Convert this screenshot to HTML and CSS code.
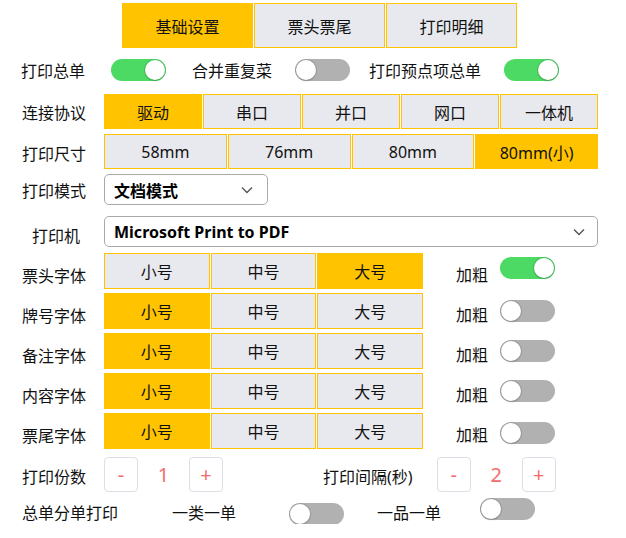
FILE: index.html
```html
<!DOCTYPE html>
<html lang="zh-CN">
  <head>
    <meta charset="UTF-8" />
    <meta name="viewport" content="width=device-width, initial-scale=1.0" />
    <title>打印设置</title>
    <link rel="stylesheet" href="styles.css">
  </head>
  <body>
    <div class="page">
      <div class="tabs">
        <div class="tab ativo">基础设置</div>
        <div class="tab">票头票尾</div>
        <div class="tab">打印明细</div>
      </div>

      <div class="linha linha-switch">
        <span class="texto t-total">打印总单</span>
        <span class="toggle on"></span>
        <span class="texto t-merge">合并重复菜</span>
        <span class="toggle"></span>
        <span class="texto t-pre">打印预点项总单</span>
        <span class="toggle on"></span>
      </div>

      <div class="linha linha-proto">
        <span class="label">连接协议</span>
        <div class="seg seg-proto">
          <div class="btn ativo">驱动</div>
          <div class="btn">串口</div>
          <div class="btn">并口</div>
          <div class="btn">网口</div>
          <div class="btn">一体机</div>
        </div>
      </div>

      <div class="linha linha-size">
        <span class="label">打印尺寸</span>
        <div class="seg seg-proto">
          <div class="btn">58mm</div>
          <div class="btn">76mm</div>
          <div class="btn">80mm</div>
          <div class="btn ativo">80mm(小)</div>
        </div>
      </div>

      <div class="linha linha-mode">
        <span class="label">打印模式</span>
        <div class="select select-mode">
          <span>文档模式</span>
          <svg width="12" height="8" viewBox="0 0 12 8"><path d="M1 1.5 L6 6.5 L11 1.5" fill="none" stroke="#555" stroke-width="1.4"/></svg>
        </div>
      </div>

      <div class="linha linha-printer">
        <span class="label label-printer">打印机</span>
        <div class="select select-printer">
          <span>Microsoft Print to PDF</span>
          <svg width="12" height="8" viewBox="0 0 12 8"><path d="M1 1.5 L6 6.5 L11 1.5" fill="none" stroke="#555" stroke-width="1.4"/></svg>
        </div>
      </div>

      <div class="linha linha-fonte primeira">
        <span class="label label-fonte">票头字体</span>
        <div class="seg seg-fonte">
          <div class="btn">小号</div>
          <div class="btn">中号</div>
          <div class="btn ativo">大号</div>
        </div>
        <span class="texto negrito">加粗</span>
        <span class="toggle on sobe"></span>
      </div>

      <div class="linha linha-fonte">
        <span class="label label-fonte">牌号字体</span>
        <div class="seg seg-fonte">
          <div class="btn ativo">小号</div>
          <div class="btn">中号</div>
          <div class="btn">大号</div>
        </div>
        <span class="texto negrito">加粗</span>
        <span class="toggle"></span>
      </div>

      <div class="linha linha-fonte">
        <span class="label label-fonte">备注字体</span>
        <div class="seg seg-fonte">
          <div class="btn ativo">小号</div>
          <div class="btn">中号</div>
          <div class="btn">大号</div>
        </div>
        <span class="texto negrito">加粗</span>
        <span class="toggle"></span>
      </div>

      <div class="linha linha-fonte">
        <span class="label label-fonte">内容字体</span>
        <div class="seg seg-fonte">
          <div class="btn ativo">小号</div>
          <div class="btn">中号</div>
          <div class="btn">大号</div>
        </div>
        <span class="texto negrito">加粗</span>
        <span class="toggle"></span>
      </div>

      <div class="linha linha-fonte">
        <span class="label label-fonte">票尾字体</span>
        <div class="seg seg-fonte">
          <div class="btn ativo">小号</div>
          <div class="btn">中号</div>
          <div class="btn">大号</div>
        </div>
        <span class="texto negrito">加粗</span>
        <span class="toggle desce"></span>
      </div>

      <div class="linha linha-conta">
        <span class="label">打印份数</span>
        <div class="contador">
          <span class="mini">-</span>
          <span class="numero">1</span>
          <span class="mini">+</span>
        </div>
        <span class="texto t-intervalo">打印间隔(秒)</span>
        <div class="contador">
          <span class="mini">-</span>
          <span class="numero">2</span>
          <span class="mini">+</span>
        </div>
      </div>

      <div class="linha linha-final">
        <span class="texto t-split">总单分单打印</span>
        <span class="texto t-cat">一类一单</span>
        <span class="toggle desce"></span>
        <span class="texto t-item">一品一单</span>
        <span class="toggle sobe"></span>
      </div>
    </div>
  </body>
</html>
```

FILE: styles.css
```css
body {
  margin: 0;
  background-color: #fff;
  font-family: "Noto Sans", "Noto Sans CJK SC", sans-serif;
  font-size: 16px;
  color: #111;
}

.page {
  width: 626px;
  padding-top: 3px;
}

.tabs {
  display: flex;
  margin-left: 122px;
  height: 45px;
}

.tab {
  width: 131px;
  display: flex;
  justify-content: center;
  align-items: center;
  background: #e8e9ee;
  border: 1px solid #ffc300;
  box-sizing: border-box;
  margin-right: 1px;
}

.tab.ativo,
.btn.ativo {
  background: #ffc300;
}

.linha {
  display: flex;
  align-items: center;
}

.label {
  box-sizing: border-box;
  width: 66px;
  margin-left: 21px;
  margin-right: 17px;
  text-align: center;
  white-space: nowrap;
}

.texto {
  white-space: nowrap;
}

/* linha dos interruptores */
.linha-switch {
  margin-top: 11px;
  height: 22px;
}

.t-total {
  margin-left: 21px;
  margin-right: 26px;
}

.t-merge {
  margin-left: 26px;
  margin-right: 23px;
}

.t-pre {
  margin-left: 19px;
  margin-right: 23px;
}

.toggle {
  position: relative;
  width: 55px;
  height: 22px;
  border-radius: 11px;
  background: #b1b1b1;
  flex-shrink: 0;
}

.toggle::after {
  content: "";
  position: absolute;
  top: 1px;
  left: 1px;
  width: 20px;
  height: 20px;
  border-radius: 50%;
  background: #fff;
  box-shadow: 0 0 0 1px rgba(0, 0, 0, 0.1), 0 1px 2px rgba(0, 0, 0, 0.15);
}

.toggle.on {
  background: #4cd964;
}

.toggle.on::after {
  left: 34px;
}

.toggle.sobe {
  top: -3px;
}

.toggle.desce {
  top: 2px;
}

/* botoes segmentados */
.linha-proto {
  margin-top: 13px;
  height: 35px;
}

.linha-size {
  margin-top: 5px;
  height: 35px;
}

.seg {
  display: flex;
  height: 100%;
}

.seg-proto {
  width: 494px;
}

.btn {
  flex: 1;
  display: flex;
  justify-content: center;
  align-items: center;
  background: #e8e9ee;
  border: 1px solid #ffc300;
  box-sizing: border-box;
  margin-right: 1px;
}

.btn:last-child {
  margin-right: 0;
}

.linha-size .label {
  padding-top: 3px;
}

/* selects */
.linha-mode {
  margin-top: 5px;
  height: 31px;
}

.linha-printer {
  margin-top: 11px;
  height: 31px;
}

.label-printer {
  padding-top: 7px;
  padding-left: 4px;
}

.select {
  height: 100%;
  box-sizing: border-box;
  border: 1px solid #a9a9a9;
  border-radius: 5px;
  display: flex;
  align-items: center;
  justify-content: space-between;
  padding: 0 12px 0 9px;
  font-weight: bold;
  color: #000;
}

.select-mode {
  width: 164px;
  padding-right: 14px;
}

.select-printer {
  width: 494px;
}

/* fontes */
.linha-fonte {
  margin-top: 4px;
  height: 36px;
}

.linha-fonte.primeira {
  margin-top: 6px;
}

.label-fonte {
  padding-top: 8px;
}

.seg-fonte {
  width: 319px;
}

.negrito {
  margin-left: 33px;
  margin-right: 12px;
  padding-top: 6px;
}

/* contadores */
.linha-conta {
  margin-top: 8px;
  height: 35px;
}

.linha-conta .label {
  padding-top: 3px;
}

.contador {
  display: flex;
  align-items: center;
  height: 100%;
}

.mini {
  width: 34px;
  height: 35px;
  box-sizing: border-box;
  border: 1px solid #dcdfe6;
  border-radius: 4px;
  display: flex;
  justify-content: center;
  align-items: center;
  color: #f56c6c;
  font-size: 20px;
}

.numero {
  width: 51px;
  text-align: center;
  color: #f56c6c;
  font-size: 20px;
}

.t-intervalo {
  margin-left: 100px;
  margin-right: 24px;
  padding-top: 3px;
}

/* ultima linha */
.linha-final {
  margin-top: 8px;
  height: 24px;
}

.t-split {
  margin-left: 22px;
  margin-right: 54px;
}

.t-cat {
  margin-right: 53px;
}

.t-item {
  margin-left: 33px;
  margin-right: 39px;
}
```
